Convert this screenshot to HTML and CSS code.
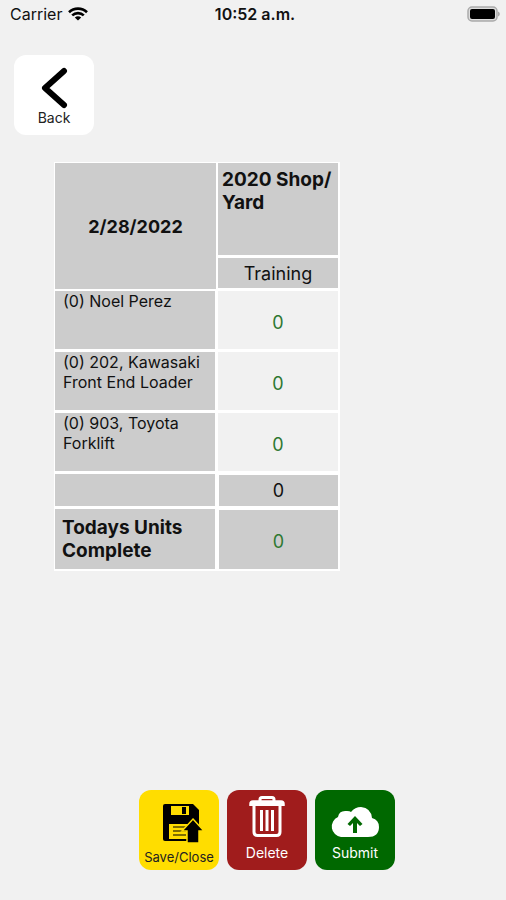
FILE: index.html
```html
<!DOCTYPE html>
<html lang="en">
<head>
  <meta charset="UTF-8">
  <meta name="viewport" content="width=device-width, initial-scale=1.0">
  <title>Daily Units</title>
  <link rel="stylesheet" href="styles.css">
</head>
<body>
  <header class="status-bar">
    <div class="carrier">
      <span>Carrier</span>
      <svg width="20" height="14" viewBox="0 0 20 14" fill="none" stroke="#000" stroke-width="2.6">
        <path d="M1 5.2a13 13 0 0 1 18 0"/>
        <path d="M4.2 8.4a8.4 8.4 0 0 1 11.6 0"/>
        <path d="M10 13.6L6.8 10.6a4.8 4.8 0 0 1 6.4 0z" fill="#000" stroke="none"/>
      </svg>
    </div>
    <span class="time">10:52 a.m.</span>
    <svg class="battery" width="33" height="17" viewBox="0 0 33 17">
      <rect x="1" y="1" width="29" height="14" rx="4" fill="#ddd" stroke="#aaa" stroke-width="1.5"/>
      <rect x="3" y="3" width="25" height="10" rx="2" fill="#000"/>
      <path d="M31 5.5c2.4.8 2.4 4.2 0 5z" fill="#aaa"/>
    </svg>
  </header>

  <nav>
    <button class="tile back" type="button">
      <svg width="28" height="42" viewBox="0 0 28 42" fill="none" stroke="#000" stroke-width="6" stroke-linecap="round" stroke-linejoin="round">
        <path d="M24 4L5 21L24 38"/>
      </svg>
      <span>Back</span>
    </button>
  </nav>

  <main>
    <table class="units">
      <thead>
        <tr>
          <th class="date" rowspan="2">2/28/2022</th>
          <th class="job">2020 Shop/<wbr>Yard</th>
        </tr>
        <tr>
          <th class="phase">Training</th>
        </tr>
      </thead>
      <tbody>
        <tr>
          <th>(0) Noel Perez</th>
          <td>0</td>
        </tr>
        <tr>
          <th>(0) 202, Kawasaki Front End Loader</th>
          <td>0</td>
        </tr>
        <tr>
          <th>(0) 903, Toyota Forklift</th>
          <td>0</td>
        </tr>
      </tbody>
      <tfoot>
        <tr class="sum">
          <th></th>
          <td>0</td>
        </tr>
        <tr class="total">
          <th>Todays Units Complete</th>
          <td>0</td>
        </tr>
      </tfoot>
    </table>
  </main>

  <footer class="actions">
    <button class="tile save" type="button">
      <svg width="50" height="40" viewBox="-8 0 50 40">
        <path d="M3 0H31L37 6V37H3Q1 37 1 35V2Q1 0 3 0z" fill="#000"/>
        <path d="M9 2H27V11H9z" fill="#ffdd00"/>
        <path d="M20 3H24V10H20z" fill="#000"/>
        <path d="M7 20H32V35H7z" fill="#ffdd00"/>
        <path d="M11 23H27M11 27H24M11 31H24" stroke="#000" stroke-width="1.2"/>
        <path d="M31 15L42 27H37V39H25V27H20z" fill="#000" stroke="#ffdd00" stroke-width="1.5"/>
      </svg>
      <span>Save/Close</span>
    </button>
    <button class="tile delete" type="button">
      <svg width="36" height="42" viewBox="0 0 36 42" fill="none" stroke="#fff" stroke-width="3">
        <path d="M11 6V3.5Q11 1.5 13 1.5H23Q25 1.5 25 3.5V6"/>
        <path d="M2 10V8Q2 6 4 6H32Q34 6 34 8V10" stroke-width="3.5"/>
        <path d="M1 8.5H35" stroke-width="3"/>
        <path d="M5 10V36Q5 39.5 8.5 39.5H27.5Q31 39.5 31 36V10"/>
        <path d="M12.5 14V35M18 14V35M23.5 14V35"/>
      </svg>
      <span>Delete</span>
    </button>
    <button class="tile submit" type="button">
      <svg width="50" height="32" viewBox="0 0 50 32">
        <path d="M11 31A10.5 10.5 0 0 1 8 11Q9 4 17 5Q20 5 21 6Q25 1 31 1Q41 2 42 12Q49 14 49 21Q49 31 38 31z" fill="#fff"/>
        <path d="M25 10L32.5 18L30 20L27 17V27H23V17L20 20L17.5 18z" fill="#006800"/>
      </svg>
      <span>Submit</span>
    </button>
  </footer>
</body>
</html>
```

FILE: styles.css
```css
* {
  box-sizing: border-box;
}
body {
  margin: 0;
  min-height: 100vh;
  display: flex;
  flex-direction: column;
  background-color: #f1f1f1;
  color: #111;
  font-family: Inter, "Liberation Sans", sans-serif;
}

/* status bar */
.status-bar {
  display: grid;
  grid-template-columns: 1fr auto 1fr;
  align-items: center;
  height: 28px;
  padding: 0 6px 0 10px;
  font-size: 16px;
}
.carrier {
  display: flex;
  align-items: center;
  gap: 6px;
}
.time {
  font-weight: 600;
}
.battery {
  justify-self: end;
}

/* square icon buttons */
.tile {
  width: 80px;
  height: 80px;
  padding: 0 0 8px;
  border: none;
  border-radius: 12px;
  display: flex;
  flex-direction: column;
  align-items: center;
  justify-content: flex-end;
  color: #fff;
  font-family: inherit;
  font-size: 14px;
  line-height: 18px;
  cursor: pointer;
}
nav {
  padding: 27px 14px;
}
.back {
  background-color: #fff;
  color: #222;
}

/* units table */
main {
  padding: 0 54px;
}
.units {
  width: 286px;
  table-layout: fixed;
  border-collapse: separate;
  border-spacing: 0;
  font-size: 18px;
  line-height: 23px;
}
.units th,
.units td {
  padding: 0;
  border: solid #fff;
  border-width: 1px 2px 2px 1px;
}
.units th {
  background-color: #ccc;
}
.units td {
  color: #2e7831;
  text-align: center;
}
.units .date {
  width: 163px;
  border-width: 1px;
}
.units .job {
  height: 95px;
  padding: 5px 4px;
  font-size: 19px;
  text-align: left;
  vertical-align: top;
}
.units .phase {
  height: 33px;
  font-weight: 400;
}
.units tbody th {
  height: 61px;
  padding: 0 8px;
  font-size: 16px;
  font-weight: 400;
  line-height: 20px;
  text-align: left;
  vertical-align: top;
}
.units tbody td {
  padding-top: 4px;
}
.units tfoot th,
.units tfoot td {
  background-color: #ccc;
}
.units tfoot td {
  border-width: 2px;
}
.units .sum td {
  height: 35px;
  color: #111;
}
.units .total th {
  height: 63px;
  padding: 0 7px;
  font-size: 19px;
  text-align: left;
}
.units .total td {
  padding-top: 4px;
}

/* bottom buttons */
.actions {
  display: flex;
  justify-content: center;
  gap: 8px;
  margin-top: auto;
  padding: 0 0 30px 28px;
}
.save {
  padding-bottom: 4px;
  background-color: #ffdd00;
  color: #222;
  font-size: 13px;
}
.save svg {
  margin-bottom: 4px;
}
.delete {
  background-color: #a01c1c;
}
.submit {
  background-color: #006800;
}
.delete svg,
.submit svg {
  margin-bottom: 6px;
}
```
